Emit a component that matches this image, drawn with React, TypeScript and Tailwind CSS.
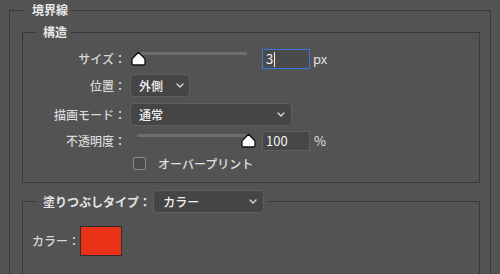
import React from "react";

function Thumb() {
  return (
    <svg width="15" height="15" viewBox="0 0 15 15">
      <path
        d="M7.5 1.2 L13.4 7.3 Q14 7.9 14 8.8 L14 12.6 Q14 14 12.6 14 L2.4 14 Q1 14 1 12.6 L1 8.8 Q1 7.9 1.6 7.3 Z"
        fill="#ffffff"
        stroke="#111111"
        strokeWidth="1.3"
        strokeLinejoin="round"
      />
    </svg>
  );
}

function Chevron() {
  return (
    <svg width="8" height="5" viewBox="0 0 8 5">
      <path d="M1 1 L4 4 L7 1" fill="none" stroke="#dcdcdc" strokeWidth="1.3" strokeLinecap="round" strokeLinejoin="round" />
    </svg>
  );
}

function Slider({ track, thumb }: { track: number; thumb: number }) {
  return (
    <div className="relative w-[132px] h-[20px] shrink-0">
      <div className="absolute left-[7px] top-[3px] h-[3px] bg-[#6f6f6f] rounded-full" style={{ width: track }} />
      <div className="absolute top-[2px]" style={{ left: thumb }}>
        <Thumb />
      </div>
    </div>
  );
}

export default function App() {
  return (
    <div className="w-[500px] h-[274px] overflow-hidden bg-[#535353] pt-[2px] px-[9px] font-['Noto_Sans_CJK_JP','Noto_Sans',sans-serif] text-[12px] text-[#d8d8d8]">
      <fieldset className="border border-[#393939] pb-[40px]">
        <legend className="ml-[15px] pl-[7px] pr-[3px] leading-[16px] font-semibold text-[#e6e6e6]">境界線</legend>

        <fieldset className="ml-[12px] mr-[10px] mt-[6px] border border-[#393939]">
          <legend className="ml-[13px] pl-[7px] pr-[4px] leading-[16px] font-semibold text-[#e6e6e6]">構造</legend>
          <div className="pt-[9px] pb-[12px] flex flex-col">
            <div className="flex items-center h-[20px]">
              <div className="w-[103px] text-right leading-[16px] font-medium">サイズ：</div>
              <div className="ml-[4px] flex items-center">
                <Slider track={110} thumb={1} />
                <div className="w-[48px] h-[20px] border border-[#3b78dc] bg-[#4a4a4a] flex items-center pl-[3px] text-[#f2f2f2] text-[13px] leading-[16px]">
                  3<span className="inline-block w-[1px] h-[15px] bg-[#f2f2f2] ml-[1px]" />
                </div>
                <span className="ml-[3px] text-[13px] text-[#e0e0e0]">px</span>
              </div>
            </div>

            <div className="flex items-center h-[23px] mt-[5px]">
              <div className="w-[103px] text-right leading-[16px] font-medium">位置：</div>
              <div className="ml-[4px] w-[60px] h-[23px] rounded-[4px] border border-[#5f5f5f] bg-[#454545] flex items-center justify-between pl-[8px] pr-[5px] font-medium text-[#f2f2f2]">
                <span>外側</span>
                <Chevron />
              </div>
            </div>

            <div className="flex items-center h-[23px] mt-[6px]">
              <div className="w-[103px] text-right leading-[16px] font-medium">描画モード：</div>
              <div className="ml-[4px] w-[162px] h-[23px] rounded-[4px] border border-[#5f5f5f] bg-[#454545] flex items-center justify-between pl-[8px] pr-[6px] font-medium text-[#f2f2f2]">
                <span>通常</span>
                <Chevron />
              </div>
            </div>

            <div className="flex items-center h-[20px] mt-[5px]">
              <div className="w-[103px] text-right leading-[16px] font-medium">不透明度：</div>
              <div className="ml-[4px] flex items-center">
                <Slider track={113} thumb={111} />
                <div className="w-[48px] h-[20px] border border-[#5f5f5f] bg-[#474747] flex items-center pl-[3px] text-[#f2f2f2] text-[13px] leading-[16px]">
                  100
                </div>
                <span className="ml-[4px] text-[13px] text-[#e0e0e0]">%</span>
              </div>
            </div>

            <div className="flex items-center h-[13px] mt-[6px]">
              <div className="w-[110px]" />
              <div className="w-[13px] h-[13px] rounded-[2px] border border-[#8a8a8a] bg-[#4b4b4b]" />
              <span className="ml-[12px] leading-[16px] font-medium text-[#e0e0e0]">オーバープリント</span>
            </div>
          </div>
        </fieldset>

        <fieldset className="ml-[12px] mr-[10px] mt-[7px] border border-[#393939] pb-[40px]">
          <legend className="ml-[13px] pl-[7px] pr-[4px] flex items-center h-[23px]">
            <span className="leading-[16px] font-semibold text-[#e6e6e6]">塗りつぶしタイプ：</span>
            <div className="ml-[2px] w-[111px] h-[23px] rounded-[4px] border border-[#5f5f5f] bg-[#454545] flex items-center justify-between pl-[9px] pr-[6px] font-medium text-[#f2f2f2]">
              <span>カラー</span>
              <Chevron />
            </div>
          </legend>
          <div className="pt-[13px] pl-[9px] flex items-center">
            <span className="leading-[16px] font-medium text-[#d8d8d8]">カラー：</span>
            <div className="w-[42px] h-[30px] border border-[#2e2e2e] bg-[#ea3218]" />
          </div>
        </fieldset>
      </fieldset>
    </div>
  );
}
